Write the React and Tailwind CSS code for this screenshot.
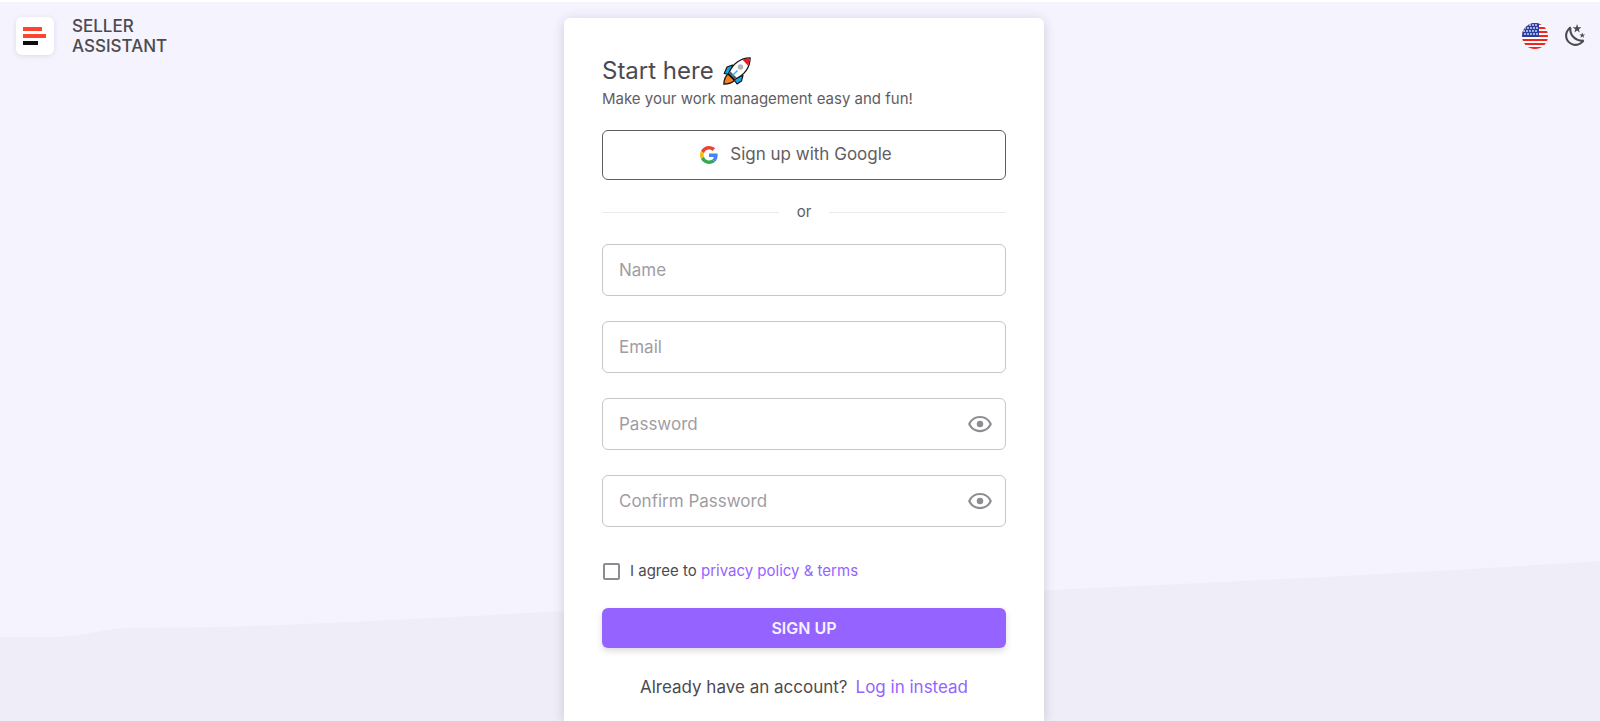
import { useState } from "react";

const Ic = {
  Logo: () => (
    <svg width="24" height="20" viewBox="0 0 24 20">
      <rect y="1" width="19" height="4" fill="#ff4530" />
      <rect y="8" width="23" height="4" fill="#ff4530" />
      <rect y="15" width="15" height="4" fill="#0d0c12" />
    </svg>
  ),
  Moon: () => (
    <svg width="25" height="25" viewBox="0 0 24 24" fill="currentColor">
      <path d="m17.75 4.09-2.53 1.94.91 3.06-2.63-1.81-2.63 1.81.91-3.06-2.53-1.94L12.44 4l1.06-3 1.06 3 3.19.09m3.5 6.91-1.64 1.25.59 1.98-1.7-1.17-1.7 1.17.59-1.98L15.75 11l2.06-.05L18.5 9l.69 1.95 2.06.05m-2.28 4.95c.83-.08 1.72 1.1 1.19 1.85-.32.45-.66.87-1.08 1.27C15.17 23 8.84 23 4.94 19.07c-3.91-3.9-3.91-10.24 0-14.14.4-.4.82-.76 1.27-1.08.75-.53 1.93.36 1.85 1.19-.27 2.86.69 5.83 2.89 8.02a9.96 9.96 0 0 0 8.02 2.89m-1.64 2.02a12.08 12.08 0 0 1-7.8-3.47c-2.17-2.19-3.33-5-3.49-7.82-2.81 3.14-2.7 7.96.31 10.98 3.02 3.01 7.84 3.12 10.98.31Z" />
    </svg>
  ),
  Eye: () => (
    <svg width="26" height="26" viewBox="0 0 24 24" fill="currentColor">
      <path d="M12 9a3 3 0 0 1 3 3 3 3 0 0 1-3 3 3 3 0 0 1-3-3 3 3 0 0 1 3-3m0-4.5c5 0 9.27 3.11 11 7.5-1.73 4.39-6 7.5-11 7.5S2.73 16.39 1 12c1.73-4.39 6-7.5 11-7.5M3.18 12a9.821 9.821 0 0 0 17.64 0 9.821 9.821 0 0 0-17.64 0Z" />
    </svg>
  ),
  Google: () => (
    <svg width="18" height="18" viewBox="0 0 48 48">
      <path fill="#EA4335" d="M24 9.5c3.54 0 6.71 1.22 9.21 3.6l6.85-6.85C35.9 2.38 30.47 0 24 0 14.62 0 6.51 5.38 2.56 13.22l7.98 6.19C12.43 13.72 17.74 9.5 24 9.5z" />
      <path fill="#4285F4" d="M46.98 24.55c0-1.57-.15-3.09-.38-4.55H24v9.02h12.94c-.58 2.96-2.26 5.48-4.78 7.18l7.73 6c4.51-4.18 7.09-10.36 7.09-17.65z" />
      <path fill="#FBBC05" d="M10.53 28.59c-.48-1.45-.76-2.99-.76-4.59s.27-3.14.76-4.59l-7.98-6.19C.92 16.46 0 20.12 0 24c0 3.88.92 7.54 2.56 10.78l7.97-6.19z" />
      <path fill="#34A853" d="M24 48c6.48 0 11.93-2.13 15.89-5.81l-7.73-6c-2.15 1.45-4.92 2.3-8.16 2.3-6.26 0-11.57-4.22-13.47-9.91l-7.98 6.19C6.51 42.62 14.62 48 24 48z" />
    </svg>
  ),
  Rocket: () => (
    <svg width="28" height="28" viewBox="0 0 28 28" strokeLinejoin="round">
      <path d="M9.500 8 4 10 1.200 16.500l6.300 1.500z" fill="#12a5ea" stroke="#111" strokeWidth="1.100" />
      <path d="m20 18.500-1.500 5.500-4.500 3-3.500-5z" fill="#12a5ea" stroke="#111" strokeWidth="1.100" />
      <path d="M5 17C2 19.500 1 23 .8 27.200c4.200-.2 8.200-1.200 10.700-3.700z" fill="#f5821f" stroke="#111" strokeWidth="1.200" />
      <path d="M5.500 16.500C9.500 7.500 16 1 27.200.8 27 12.500 20.500 18.500 11.500 22.500z" fill="#fff" stroke="#111" strokeWidth="1.200" />
      <path d="M19.500 2.700C22 1.600 24.500 1.500 26.500 1.500c0 2.500-.4 5-1.400 7.300z" fill="#ed1c24" />
      <path d="m6 16.500 5.700 5.500 2-1.200-6.500-6.500z" fill="#58595b" />
      <path d="m9.500 18.500 5-5" stroke="#29b6f6" strokeWidth="1.400" />
      <circle cx="17.500" cy="10" r="2.800" fill="#b4b6ba" />
    </svg>
  ),
  Flag: () => (
    <svg width="26" height="26" viewBox="0 0 26 26">
      <clipPath id="flag"><circle cx="13" cy="13" r="13" /></clipPath>
      <g clipPath="url(#flag)">
        <rect width="26" height="26" fill="#fff" />
        {[0, 4, 8, 12, 16, 20, 24].map((y) => <rect key={y} y={y} width="26" height="2" fill="#f5231c" />)}
        <rect width="17" height="14" fill="#2a3f9d" />
        {[2, 5, 8, 11].map((y) =>
          [2, 5, 8, 11, 14].map((x) => <circle key={`${x}-${y}`} cx={x + (y % 2)} cy={y} r="0.9" fill="#dfe4f7" />)
        )}
      </g>
    </svg>
  ),
};

const FIELDS = [
  { id: "name", label: "Name", type: "text" },
  { id: "email", label: "Email", type: "email" },
  { id: "password", label: "Password", type: "password" },
  { id: "confirm", label: "Confirm Password", type: "password" },
];

const Field = ({ id, label, type }) => {
  const [visible, setVisible] = useState(false);
  const secret = type === "password";

  return (
    <div className="flex items-center h-[52px] pr-3 border border-[#c6c5c9] rounded-md focus-within:border-[#9563ff]">
      <input
        id={id}
        aria-label={label}
        type={secret && visible ? "text" : type}
        placeholder={label}
        className="flex-1 min-w-0 h-full pl-4 bg-transparent outline-none text-[17px] leading-6 placeholder:text-[#9f9da3]"
      />
      {secret && (
        <button type="button" aria-label="Toggle visibility" onClick={() => setVisible((v) => !v)} className="text-[#8e8c92]">
          <Ic.Eye />
        </button>
      )}
    </div>
  );
};

const App = () => {
  const [agree, setAgree] = useState(false);

  return (
    <div className="relative isolate flex flex-col min-h-screen bg-[#f4f3fe] border-t-2 border-white font-['Inter',sans-serif] text-[#4c4a50]">
      <svg className="absolute inset-x-0 bottom-0 -z-10 w-full h-40" viewBox="0 0 1600 160" preserveAspectRatio="none" aria-hidden="true">
        <path d="M0 76H60C90 74 100 68 130 67L220 66C340 62 450 56 565 50L1054 29C1240 20 1420 12 1600 0V160H0z" fill="#efeef8" />
      </svg>

      <div className="flex-1 grid grid-cols-[1fr_minmax(0,480px)_1fr] pt-3.5 pl-2">
        <header className="flex items-start pl-2">
          <a href="#" className="flex items-center gap-[18px] text-[17px] leading-5 font-medium">
            <span className="flex items-center justify-center size-[38px] bg-white rounded-md shadow-[0_1px_5px_rgba(58,53,65,0.12)]">
              <Ic.Logo />
            </span>
            <span>SELLER<br />ASSISTANT</span>
          </a>
        </header>

        <main className="mt-0.5 bg-white rounded-t-md px-[38px] pt-[37px] shadow-[0_2px_12px_rgba(58,53,65,0.2)]">
          <h1 className="flex items-center gap-[9px] text-2xl">
            Start here <Ic.Rocket />
          </h1>
          <p className="text-[15px] leading-6 text-[#5f5d63]">Make your work management easy and fun!</p>

          <button type="button" className="flex items-center justify-center gap-3 w-full h-[50px] mt-[19px] pr-4 border border-[#5f5d63] rounded-md text-[17px] text-[#5f5d63]">
            <Ic.Google />
            Sign up with Google
          </button>

          <div className="flex items-center gap-[18px] h-16 text-[15px] text-[#5f5d63]">
            <span className="flex-1 h-px bg-[#ebeaed]" />
            or
            <span className="flex-1 h-px bg-[#ebeaed]" />
          </div>

          <form onSubmit={(e) => e.preventDefault()}>
            <div className="flex flex-col gap-[25px]">
              {FIELDS.map((f) => <Field key={f.id} {...f} />)}
            </div>

            <div className="flex items-center gap-[10px] h-5 mt-[34px] pl-px text-[15px]">
              <input
                id="agree"
                type="checkbox"
                checked={agree}
                onChange={(e) => setAgree(e.target.checked)}
                className="appearance-none size-[17px] border-2 border-[#8e8c92] rounded-xs checked:bg-[#9563ff] checked:border-[#9563ff]"
              />
              <label htmlFor="agree">
                I agree to <a href="#" className="text-[#9563ff]">privacy policy &amp; terms</a>
              </label>
            </div>

            <button type="submit" className="w-full h-10 mt-[27px] rounded-md bg-[#9563ff] text-[#f6f2ff] text-base font-semibold shadow-[0_3px_6px_rgba(58,53,65,0.18)]">
              SIGN UP
            </button>
          </form>

          <p className="flex flex-wrap justify-center gap-x-2 mt-[27px] text-[17px] leading-6">
            Already have an account?
            <a href="#" className="text-[#9563ff]">Log in instead</a>
          </p>
        </main>

        <div className="flex items-start justify-end gap-[15px] pt-[7px] pr-3">
          <button type="button" aria-label="Language"><Ic.Flag /></button>
          <button type="button" aria-label="Dark mode"><Ic.Moon /></button>
        </div>
      </div>
    </div>
  );
};

export default App;
